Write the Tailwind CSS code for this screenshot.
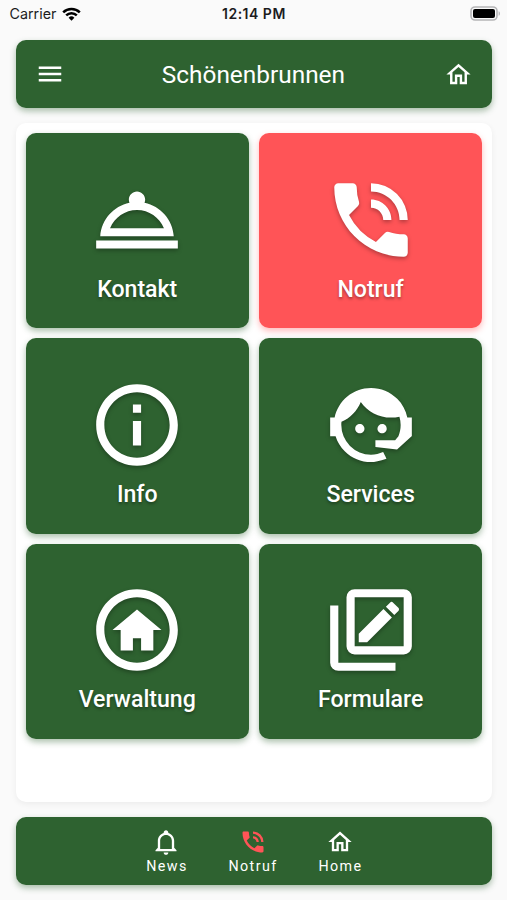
<!DOCTYPE html>
<html lang="de">
<head>
    <meta charset="UTF-8">
    <meta name="viewport" content="width=device-width, initial-scale=1.0">
    <title>Schönenbrunnen</title>
    <script src="https://cdn.jsdelivr.net/npm/@tailwindcss/browser@4"></script>
</head>
<body class="bg-[#fafafa] font-['Roboto',sans-serif] text-white">
    <div class="w-[507px] h-[900px] pl-[15.5px] pr-[14.7px] flex flex-col overflow-hidden">
        <!-- Status Bar -->
        <div class="h-10 shrink-0 -mx-[6px] pb-[13px] grid grid-cols-3 items-center font-['Inter',sans-serif] text-[14px] text-[#1c1c1e]">
            <div class="flex items-center gap-[6px]">
                <span class="text-[14.3px]">Carrier</span>
                <svg class="w-[19px] h-[14px]" viewBox="0 0 19 14" fill="none" stroke="#000" stroke-width="2.5">
                    <path d="M1.2 5.3a11.8 11.8 0 0 1 16.6 0"></path>
                    <path d="M4.2 8.4a7.5 7.5 0 0 1 10.6 0"></path>
                    <path d="M9.5 13.8l-2.9-3a4.1 4.1 0 0 1 5.8 0z" fill="#000" stroke="none"></path>
                </svg>
            </div>
            <p class="text-center font-semibold whitespace-nowrap tracking-[0.5px]">12:14 PM</p>
            <svg class="w-[31px] h-[15px] justify-self-end translate-x-[3px]" viewBox="0 0 31 15">
                <rect x="1" y="1" width="26" height="13" rx="4" fill="#fafafa" stroke="#b5b5b7" stroke-width="1.6"></rect>
                <rect x="3" y="3" width="22" height="9" rx="2" fill="#000"></rect>
                <path d="M28.6 5.2c1.8.7 1.8 3.9 0 4.6z" fill="#b5b5b7"></path>
            </svg>
        </div>

        <!-- Header -->
        <header class="h-[68.4px] shrink-0 px-[19px] flex items-center justify-between rounded-[10px] bg-[#2e6230] shadow-[0_3px_6px_rgba(46,98,48,0.4)]">
            <svg class="w-[30px] h-[30px]" viewBox="0 0 24 24" fill="currentColor"><path d="M3 6h18v2H3zm0 5h18v2H3zm0 5h18v2H3z"></path></svg>
            <h1 class="pt-[2px] pr-[2px] text-[24.4px] leading-none">Schönenbrunnen</h1>
            <svg class="w-[29px] h-[29px]" viewBox="0 0 24 24" fill="currentColor"><path d="M12 5.69l5 4.5V18h-2v-6H9v6H7v-7.81l5-4.5M12 3L2 12h3v8h6v-6h2v6h6v-8h3z"></path></svg>
        </header>

        <!-- Tiles -->
        <main class="mt-[14.6px] h-[679px] shrink-0 p-[10px] rounded-[10px] bg-white shadow-[0_2px_6px_rgba(0,0,0,0.06)]">
            <div class="grid grid-cols-2 gap-[10px] text-[23.1px] leading-7 font-medium text-shadow-[0_2px_3px_rgba(0,0,0,0.35)]">
                <a class="h-[195.3px] pt-[37.7px] flex flex-col items-center gap-[7px] rounded-[10px] bg-[#2e6230] shadow-[0_3px_6px_rgba(46,98,48,0.4)]">
                    <svg class="w-[98px] h-[98px] drop-shadow-[0_2px_2px_rgba(0,0,0,0.3)]" viewBox="0 0 24 24" fill="currentColor"><path d="M2 17h20v2H2v-2zm11.84-9.21c.1-.24.16-.51.16-.79 0-1.1-.9-2-2-2s-2 .9-2 2c0 .28.06.55.16.79C6.25 8.6 3.27 11.93 3 16h18c-.27-4.07-3.25-7.4-7.16-8.21zM12 9.58c2.95 0 5.47 1.83 6.6 4.42H5.4c1.13-2.59 3.65-4.42 6.6-4.42z"></path></svg>
                    <span>Kontakt</span>
                </a>
                <a class="h-[195.3px] pt-[37.7px] flex flex-col items-center gap-[7px] rounded-[10px] bg-[#ff5457] shadow-[0_3px_6px_rgba(255,84,87,0.4)]">
                    <svg class="w-[98px] h-[98px] drop-shadow-[0_2px_2px_rgba(0,0,0,0.3)]" viewBox="0 0 24 24" fill="currentColor"><path d="M20 15.5c-1.25 0-2.45-.2-3.57-.57a1.02 1.02 0 0 0-1.02.24l-2.2 2.2a15.045 15.045 0 0 1-6.59-6.59l2.2-2.21a.96.96 0 0 0 .25-1A11.36 11.36 0 0 1 8.5 4c0-.55-.45-1-1-1H4c-.55 0-1 .45-1 1 0 9.39 7.61 17 17 17 .55 0 1-.45 1-1v-3.5c0-.55-.45-1-1-1zM19 12h2a9 9 0 0 0-9-9v2c3.87 0 7 3.13 7 7zm-4 0h2c0-2.76-2.24-5-5-5v2c1.66 0 3 1.34 3 3z"></path></svg>
                    <span>Notruf</span>
                </a>
                <a class="h-[195.3px] pt-[37.7px] flex flex-col items-center gap-[7px] rounded-[10px] bg-[#2e6230] shadow-[0_3px_6px_rgba(46,98,48,0.4)]">
                    <svg class="w-[98px] h-[98px] drop-shadow-[0_2px_2px_rgba(0,0,0,0.3)]" viewBox="0 0 24 24" fill="currentColor"><path d="M11 7h2v2h-2zm0 4h2v6h-2zm1-9C6.48 2 2 6.48 2 12s4.48 10 10 10 10-4.48 10-10S17.52 2 12 2zm0 18c-4.41 0-8-3.59-8-8s3.59-8 8-8 8 3.59 8 8-3.59 8-8 8z"></path></svg>
                    <span>Info</span>
                </a>
                <a class="h-[195.3px] pt-[37.7px] flex flex-col items-center gap-[7px] rounded-[10px] bg-[#2e6230] shadow-[0_3px_6px_rgba(46,98,48,0.4)]">
                    <svg class="w-[98px] h-[98px] drop-shadow-[0_2px_2px_rgba(0,0,0,0.3)]" viewBox="0 0 24 24" fill="currentColor"><path d="M18.72 14.76C19.07 13.91 19.26 13 19.26 12C19.26 11.28 19.15 10.59 18.96 9.95C18.31 10.1 17.63 10.18 16.92 10.18C13.86 10.18 11.15 8.67 9.5 6.34C8.61 8.5 6.91 10.26 4.77 11.22C4.73 11.47 4.73 11.74 4.73 12A7.27 7.27 0 0 0 12 19.27C13.05 19.27 14.06 19.04 14.97 18.63C15.54 19.72 15.8 20.26 15.78 20.26C14.14 20.81 12.87 21.08 12 21.08C9.58 21.08 7.27 20.13 5.57 18.42C4.53 17.38 3.76 16.11 3.33 14.73H2V10.18H3.09C3.93 6.04 7.6 2.92 12 2.92C14.4 2.92 16.71 3.87 18.42 5.58C19.69 6.84 20.54 8.45 20.89 10.18H22V14.73H21.94L18.38 18L13.08 17.4V15.73H17.91L18.72 14.76M9.27 11.77C9.57 11.77 9.86 11.89 10.07 12.11C10.28 12.32 10.4 12.61 10.4 12.91C10.4 13.21 10.28 13.5 10.07 13.71C9.86 13.92 9.57 14.04 9.27 14.04C8.64 14.04 8.13 13.54 8.13 12.91C8.13 12.28 8.64 11.77 9.27 11.77M14.72 11.77C15.35 11.77 15.85 12.28 15.85 12.91C15.85 13.54 15.35 14.04 14.72 14.04C14.09 14.04 13.58 13.54 13.58 12.91A1.14 1.14 0 0 1 14.72 11.77Z"></path></svg>
                    <span>Services</span>
                </a>
                <a class="h-[195.3px] pt-[37.7px] flex flex-col items-center gap-[7px] rounded-[10px] bg-[#2e6230] shadow-[0_3px_6px_rgba(46,98,48,0.4)]">
                    <svg class="w-[98px] h-[98px] drop-shadow-[0_2px_2px_rgba(0,0,0,0.3)]" viewBox="0 0 24 24" fill="currentColor"><path d="M12 2C6.48 2 2 6.48 2 12s4.48 10 10 10 10-4.48 10-10S17.52 2 12 2zm0 18c-4.41 0-8-3.59-8-8s3.59-8 8-8 8 3.59 8 8-3.59 8-8 8z"></path><path d="M18 12h-2v5h-3v-3h-2v3H8v-5H6l6-5z"></path></svg>
                    <span>Verwaltung</span>
                </a>
                <a class="h-[195.3px] pt-[37.7px] flex flex-col items-center gap-[7px] rounded-[10px] bg-[#2e6230] shadow-[0_3px_6px_rgba(46,98,48,0.4)]">
                    <svg class="w-[98px] h-[98px] drop-shadow-[0_2px_2px_rgba(0,0,0,0.3)]" viewBox="0 0 24 24" fill="currentColor"><path d="M4 6H2v14a2 2 0 0 0 2 2h14v-2H4zM20 2H8a2 2 0 0 0-2 2v12a2 2 0 0 0 2 2h12a2 2 0 0 0 2-2V4a2 2 0 0 0-2-2zm0 14H8V4h12z"></path><path d="M18.7 7.35l-1 1-2.05-2.05 1-1a.55.55 0 0 1 .77 0l1.28 1.28c.22.21.22.56 0 .77M9 12.94l6.06-6.06 2.06 2.06L11.06 15H9z"></path></svg>
                    <span>Formulare</span>
                </a>
            </div>
        </main>

        <!-- Bottom Navigation -->
        <nav class="mt-[15px] h-[68px] shrink-0 pt-[11px] pl-[107px] flex rounded-[10px] bg-[#2e6230] shadow-[0_3px_6px_rgba(46,98,48,0.4)] text-[14.3px] leading-[18px] tracking-[1.4px]">
            <a class="w-[87px] flex flex-col items-center gap-px">
                <svg class="w-7 h-7" viewBox="0 0 24 24" fill="currentColor"><path d="M10 21H14C14 22.1 13.1 23 12 23S10 22.1 10 21M21 19V20H3V19L5 17V11C5 7.9 7.03 5.17 10 4.29V4C10 2.9 10.9 2 12 2S14 2.9 14 4V4.29C16.97 5.17 19 7.9 19 11V17L21 19M17 11C17 8.24 14.76 6 12 6S7 8.24 7 11V18H17V11Z"></path></svg>
                <span class="pl-[2px]">News</span>
            </a>
            <a class="w-[87px] flex flex-col items-center gap-px">
                <svg class="w-7 h-7 text-[#ff5457]" viewBox="0 0 24 24" fill="currentColor"><path d="M20 15.5c-1.25 0-2.45-.2-3.57-.57a1.02 1.02 0 0 0-1.02.24l-2.2 2.2a15.045 15.045 0 0 1-6.59-6.59l2.2-2.21a.96.96 0 0 0 .25-1A11.36 11.36 0 0 1 8.5 4c0-.55-.45-1-1-1H4c-.55 0-1 .45-1 1 0 9.39 7.61 17 17 17 .55 0 1-.45 1-1v-3.5c0-.55-.45-1-1-1zM19 12h2a9 9 0 0 0-9-9v2c3.87 0 7 3.13 7 7zm-4 0h2c0-2.76-2.24-5-5-5v2c1.66 0 3 1.34 3 3z"></path></svg>
                <span>Notruf</span>
            </a>
            <a class="w-[87px] flex flex-col items-center gap-px">
                <svg class="w-7 h-7" viewBox="0 0 24 24" fill="currentColor"><path d="M12 5.69l5 4.5V18h-2v-6H9v6H7v-7.81l5-4.5M12 3L2 12h3v8h6v-6h2v6h6v-8h3z"></path></svg>
                <span class="pl-px">Home</span>
            </a>
        </nav>
    </div>
</body>
</html>
